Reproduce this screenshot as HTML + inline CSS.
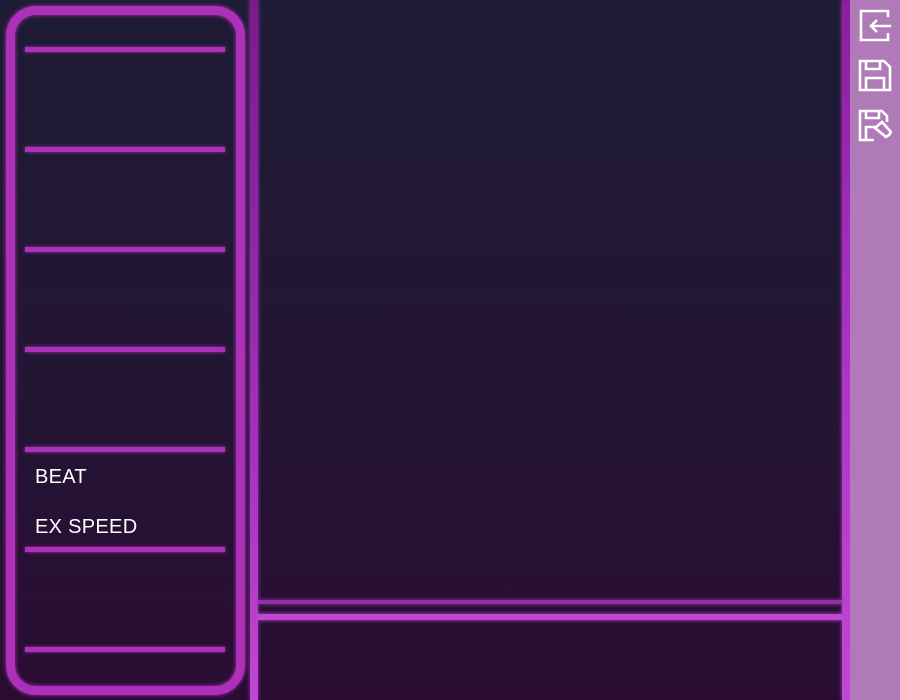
<!DOCTYPE html>
<html><head><meta charset="utf-8"><style>
*{margin:0;padding:0;box-sizing:border-box}
body{width:900px;height:700px;overflow:hidden;position:relative;background:linear-gradient(#1e1b34 0%,#221634 50%,#2a0c33 100%);font-family:"Liberation Sans",sans-serif}
.panel{position:absolute;left:6px;top:6px;width:239px;height:689px;border:9px solid #ac30b8;border-radius:30px;box-shadow:0 0 4px #ac30b8,inset 0 0 4px #ac30b8}
.hl{position:absolute;left:25px;width:200px;height:5px;background:#ac30b8;box-shadow:0 0 3px #ac30b8}
.txt{position:absolute;left:35px;color:#fff;font-size:20px;letter-spacing:0.3px}
.v{position:absolute;top:0;height:700px;width:8px}
.side{position:absolute;left:850px;top:0;width:50px;height:700px;background:#b07ab8}
svg{position:absolute}
</style></head><body>
<div class="panel"></div>
<div class="hl" style="top:47px"></div>
<div class="hl" style="top:147px"></div>
<div class="hl" style="top:247px"></div>
<div class="hl" style="top:347px"></div>
<div class="hl" style="top:447px"></div>
<div class="hl" style="top:547px"></div>
<div class="hl" style="top:647px"></div>
<div class="txt" style="top:466px">BEAT</div>
<div class="txt" style="top:516px">EX SPEED</div>
<div class="v" style="left:250px;background:linear-gradient(#7a1a8c,#a030b8 60%,#c048d0);box-shadow:0 0 4px #a030b8"></div>
<div class="v" style="left:842px;background:linear-gradient(#8a1ea0,#b038c8 60%,#c048d0);box-shadow:0 0 4px #b038c8"></div>
<div style="position:absolute;left:258px;top:600px;width:584px;height:4px;background:#9030a8;box-shadow:0 0 4px #9030a8"></div>
<div style="position:absolute;left:258px;top:614px;width:584px;height:6px;background:#c048d0;box-shadow:0 0 4px #c048d0"></div>
<div class="side"></div>
<svg style="left:858px;top:8px" width="34" height="34" viewBox="0 0 34 34" fill="none" stroke="#fff" stroke-width="2.6">
<path d="M30 9V3H3v29h27v-7"/><path d="M33 18H13M19 12l-6 6 6 6"/></svg>
<svg style="left:858px;top:58px" width="34" height="34" viewBox="0 0 34 34" fill="none" stroke="#fff" stroke-width="2.6">
<path d="M2 3h24l6 6v23H2z"/><path d="M8 3v8h14V3"/><path d="M8 32V20h18v12"/></svg>
<svg style="left:858px;top:108px" width="34" height="34" viewBox="0 0 34 34" fill="none" stroke="#fff" stroke-width="2.6">
<path d="M16 32H2V3h22l5 5v6"/><path d="M8 3v7h13V3"/><path d="M8 32V19h9"/><path d="M17 20l7-6 9 10-2 3-3 2z"/></svg>
</body></html>
